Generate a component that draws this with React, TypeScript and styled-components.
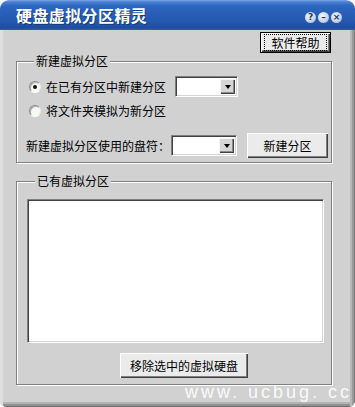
import React from "react";
import styled, { createGlobalStyle } from "styled-components";

const Global = createGlobalStyle`
  html, body { margin: 0; padding: 0; background: #ffffff; }
  * { box-sizing: border-box; }
`;

const FONT = `"Noto Sans CJK SC", "Noto Sans", sans-serif`;
const FACE = "#d1d1d1";

const Window = styled.div`
  position: relative;
  width: 355px;
  height: 407px;
  display: flex;
  flex-direction: column;
  border-radius: 9px 9px 7px 7px;
  overflow: hidden;
  font-family: ${FONT};
  font-size: 12px;
  color: #000;
`;

const TitleBar = styled.div`
  height: 30px;
  flex: none;
  display: flex;
  align-items: center;
  padding: 0 13px 0 16px;
  background: linear-gradient(
    to bottom,
    #7aa6e6 0px,
    #4a80d4 2px,
    #2d66bf 6px,
    #2559b1 20px,
    #1f4d9c 28px,
    #3c5f95 30px
  );
`;

const Title = styled.span`
  color: #ffffff;
  font-weight: 700;
  font-size: 16px;
  letter-spacing: 0.4px;
  text-shadow: 1px 1px 0 rgba(10, 30, 80, 0.55);
  line-height: 1;
`;

const TitleButtons = styled.div`
  margin-left: auto;
  display: flex;
  gap: 2px;
  align-items: center;
  margin-top: 4px;
`;

const CapButton = styled.span`
  width: 11px;
  height: 11px;
  border-radius: 50%;
  display: flex;
  align-items: center;
  justify-content: center;
  background: radial-gradient(circle at 40% 35%, #f2f6fc 0%, #c9d6ea 55%, #8ea5c9 100%);
  color: #26385c;
  font-family: "DejaVu Sans", sans-serif;
  font-weight: 700;
  font-size: 9px;
  line-height: 1;
`;

const Body = styled.div`
  flex: 1;
  display: flex;
  flex-direction: column;
  background: ${FACE};
  padding: 2px 23px 0 16px;
  box-shadow: inset 3px 0 0 #dedede, inset -1px 0 0 #7a7a7a, inset -3px 0 0 #9b9b9b,
    inset -5px 0 0 #b8b8b8, inset 0 -1px 0 #6e6e6e, inset 0 -3px 0 #929292,
    inset 0 -5px 0 #b4b4b4;
`;

const HelpRow = styled.div`
  display: flex;
  justify-content: flex-end;
  padding-right: 1px;
`;

const Button = styled.button<{ $w: number; $h: number; $default?: boolean }>`
  width: ${(p) => p.$w}px;
  height: ${(p) => p.$h}px;
  padding: 0;
  margin: 0;
  font-family: ${FONT};
  font-size: 12px;
  color: #000;
  background: #ebebeb;
  border: ${(p) => (p.$default ? "1px solid #000" : "none")};
  box-shadow: ${(p) =>
    p.$default
      ? "inset 1px 1px 0 #fff, inset -1px -1px 0 #404040, inset -2px -2px 0 #808080"
      : "inset 1px 1px 0 #fff, inset -1px -1px 0 #404040, inset -2px -2px 0 #808080"};
  display: flex;
  align-items: center;
  justify-content: center;
  cursor: default;
`;

const FocusText = styled.span`
  outline: 1px dotted #000;
  outline-offset: 0;
  padding: 1px 3px;
  line-height: 13px;
  width: 61px;
  text-align: center;
`;

const Group = styled.fieldset<{ $mt: number; $pt: number; $pb: number; $pl: number; $pr: number }>`
  margin: ${(p) => p.$mt}px 0 0 0;
  padding: ${(p) => p.$pt}px ${(p) => p.$pr}px ${(p) => p.$pb}px ${(p) => p.$pl}px;
  border: 1px solid #808080;
  box-shadow: inset 1px 1px 0 #ffffff, 1px 1px 0 #ffffff;
  min-width: 0;
  display: flex;
  flex-direction: column;
`;

const Legend = styled.legend`
  margin-left: 8px;
  padding: 0 2px;
  line-height: 14px;
  height: 14px;
  font-size: 12px;
  background: ${FACE};
`;

const Row = styled.div<{ $h: number; $mt: number }>`
  display: flex;
  align-items: center;
  height: ${(p) => p.$h}px;
  margin-top: ${(p) => p.$mt}px;
`;

const RadioLabel = styled.label`
  display: flex;
  align-items: center;
  gap: 4px;
  margin-left: 3px;
  white-space: nowrap;
  line-height: 14px;
`;

const RadioCircle = styled.span<{ $checked?: boolean }>`
  width: 12px;
  height: 12px;
  border-radius: 50%;
  background: #f7f7f7;
  border: 1px solid;
  border-color: #8a8a8a #e8e8e8 #ffffff #8a8a8a;
  box-shadow: inset 1px 1px 0 #b0b0b0;
  display: flex;
  align-items: center;
  justify-content: center;
  margin-right: 1px;

  &::after {
    content: "";
    width: 4px;
    height: 4px;
    border-radius: 50%;
    background: #111;
    display: ${(p) => (p.$checked ? "block" : "none")};
  }
`;

const Combo = styled.div<{ $w: number; $ml: number }>`
  width: ${(p) => p.$w}px;
  height: 21px;
  margin-left: ${(p) => p.$ml}px;
  background: #ffffff;
  border: 1px solid;
  border-color: #808080 #ffffff #ffffff #808080;
  box-shadow: inset 1px 1px 0 #404040, inset -1px -1px 0 #d4d4d4;
  display: flex;
  justify-content: flex-end;
  padding: 2px;
`;

const ComboArrow = styled.span`
  width: 15px;
  height: 100%;
  background: #d6d6d6;
  box-shadow: inset 1px 1px 0 #f4f4f4, inset -1px -1px 0 #404040, inset -2px -2px 0 #8a8a8a;
  display: flex;
  align-items: center;
  justify-content: center;

  &::after {
    content: "";
    width: 0;
    height: 0;
    border-left: 3.5px solid transparent;
    border-right: 3.5px solid transparent;
    border-top: 4px solid #000;
    margin-top: 1px;
  }
`;

const FieldLabel = styled.span`
  white-space: nowrap;
  line-height: 14px;
`;

const ListBox = styled.div`
  height: 144px;
  background: #ffffff;
  border: 1px solid;
  border-color: #808080 #ffffff #ffffff #808080;
  box-shadow: inset 1px 1px 0 #404040, inset -1px -1px 0 #d4d4d4;
`;

const BottomBar = styled.div`
  display: flex;
  margin-top: 10px;
  padding-left: 93px;
`;

const Watermark = styled.span`
  position: absolute;
  right: 3px;
  bottom: 6px;
  font-family: "Liberation Sans", Arial, sans-serif;
  font-size: 18px;
  letter-spacing: 3px;
  color: rgba(255, 255, 255, 0.9);
  line-height: 18px;
  white-space: pre;
`;

export default function App() {
  return (
    <>
      <Global />
      <Window>
        <TitleBar>
          <Title>硬盘虚拟分区精灵</Title>
          <TitleButtons>
            <CapButton>?</CapButton>
            <CapButton>–</CapButton>
            <CapButton>×</CapButton>
          </TitleButtons>
        </TitleBar>
        <Body>
          <HelpRow>
            <Button $w={71} $h={21} $default>
              <FocusText>软件帮助</FocusText>
            </Button>
          </HelpRow>

          <Group $mt={1} $pt={8} $pb={4} $pl={9} $pr={3}>
            <Legend>新建虚拟分区</Legend>
            <Row $h={21} $mt={0}>
              <RadioLabel>
                <RadioCircle $checked />
                在已有分区中新建分区
              </RadioLabel>
              <Combo $w={63} $ml={9}>
                <ComboArrow />
              </Combo>
            </Row>
            <Row $h={21} $mt={3}>
              <RadioLabel>
                <RadioCircle />
                将文件夹模拟为新分区
              </RadioLabel>
            </Row>
            <Row $h={25} $mt={12}>
              <FieldLabel>新建虚拟分区使用的盘符：</FieldLabel>
              <Combo $w={66} $ml={1}>
                <ComboArrow />
              </Combo>
              <Button $w={81} $h={25} style={{ marginLeft: 10 }}>
                新建分区
              </Button>
            </Row>
          </Group>

          <Group $mt={11} $pt={11} $pb={6} $pl={10} $pr={7}>
            <Legend>已有虚拟分区</Legend>
            <ListBox />
            <BottomBar>
              <Button $w={128} $h={25}>
                移除选中的虚拟硬盘
              </Button>
            </BottomBar>
          </Group>
        </Body>
        <Watermark>www. ucbug. cc</Watermark>
      </Window>
    </>
  );
}
